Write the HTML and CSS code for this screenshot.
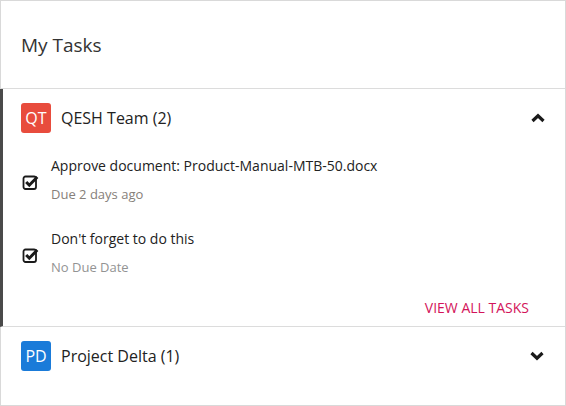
FILE: index.html
```html
<!DOCTYPE html>
<html>
<head>
<meta charset="utf-8">
<link rel="stylesheet" href="styles.css">
</head>
<body>
<div class="card">
  <div class="card-header">My Tasks</div>

  <div class="group open">
    <div class="group-head">
      <span class="avatar red">QT</span>
      <span class="group-name">QESH Team (2)</span>
      <svg class="chev" width="16" height="10" viewBox="0 0 16 10"><path d="M2.5 8 L8 2.8 L13.5 8" fill="none" stroke="#1a1a1a" stroke-width="3.2"/></svg>
    </div>
    <div class="task">
      <svg class="check" width="18" height="17" viewBox="0 0 18 17"><rect x="1.5" y="3.5" width="12.5" height="12.5" rx="2" fill="none" stroke="#1a1a1a" stroke-width="1.8"/><path d="M4.2 9 L7.3 12.2 L15.3 4" fill="none" stroke="#1a1a1a" stroke-width="3"/></svg>
      <div class="task-body">
        <div class="task-title">Approve document: Product-Manual-MTB-50.docx</div>
        <div class="task-due">Due 2 days ago</div>
      </div>
    </div>
    <div class="task">
      <svg class="check" width="18" height="17" viewBox="0 0 18 17"><rect x="1.5" y="3.5" width="12.5" height="12.5" rx="2" fill="none" stroke="#1a1a1a" stroke-width="1.8"/><path d="M4.2 9 L7.3 12.2 L15.3 4" fill="none" stroke="#1a1a1a" stroke-width="3"/></svg>
      <div class="task-body">
        <div class="task-title">Don't forget to do this</div>
        <div class="task-due light">No Due Date</div>
      </div>
    </div>
    <div class="group-foot"><a class="view-all">VIEW ALL TASKS</a></div>
  </div>

  <div class="group last">
    <div class="group-head">
      <span class="avatar blue">PD</span>
      <span class="group-name">Project Delta (1)</span>
      <svg class="chev" width="16" height="10" viewBox="0 0 16 10"><path d="M2.5 2 L8 7.2 L13.5 2" fill="none" stroke="#1a1a1a" stroke-width="3.2"/></svg>
    </div>
  </div>
</div>
</body>
</html>
```

FILE: styles.css
```css
html, body {
  margin: 0;
  padding: 0;
  background: #fff;
}
body {
  font-family: "Open Sans", "Liberation Sans", sans-serif;
  color: #2b2b2b;
}
.card {
  width: 566px;
  height: 406px;
  box-sizing: border-box;
  border: 1px solid #d9d9d9;
  display: flex;
  flex-direction: column;
}
.card-header {
  height: 88px;
  flex-shrink: 0;
  box-sizing: border-box;
  padding-left: 20px;
  display: flex;
  align-items: center;
  font-size: 19px;
  color: #333;
  border-bottom: 1px solid #dcdcdc;
}
.group {
  border-bottom: 1px solid #dcdcdc;
}
.group.last {
  border-bottom: none;
}
.group.open {
  border-left: 3px solid #4a4a4a;
  margin-left: -1px;
}
.group-head {
  display: flex;
  align-items: center;
  padding: 14px 20px 14px 20px;
  height: 30px;
}
.group.open .group-head {
  padding-left: 18px;
  padding-right: 19px;
}
.avatar {
  width: 30px;
  height: 30px;
  border-radius: 3px;
  color: #fff;
  font-size: 16px;
  display: flex;
  align-items: center;
  justify-content: center;
  flex-shrink: 0;
}
.avatar.red { background: #e84c3d; }
.avatar.blue { background: #1a7bd9; }
.group-name {
  margin-left: 10px;
  font-size: 16px;
  flex: 1;
  color: #222;
}
.chev {
  display: block;
}
.task {
  display: flex;
  align-items: center;
  padding: 9px 0 16px 19px;
}
.task + .task {
  padding-top: 9px;
}
.check {
  flex-shrink: 0;
  margin-top: 2px;
}
.task-body {
  margin-left: 11px;
}
.task-title {
  font-size: 14px;
  line-height: 20px;
  color: #222;
}
.task-due {
  font-size: 13px;
  line-height: 20px;
  margin-top: 8px;
  color: #86807a;
}
.task-due.light {
  color: #939393;
}
.group-foot {
  display: flex;
  justify-content: flex-end;
  padding: 5px 36px 8px 0;
  line-height: 20px;
}
.view-all {
  font-size: 14px;
  color: #d3145a;
}
```
